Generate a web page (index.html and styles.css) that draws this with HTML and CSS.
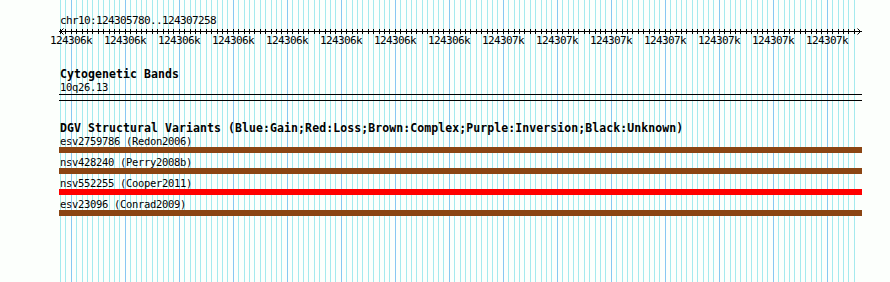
FILE: index.html
```html
<!DOCTYPE html>
<html lang="en">
<head>
  <meta charset="UTF-8" />
  <title>chr10:124305780..124307258</title>
  <link rel="stylesheet" href="styles.css">
</head>
<body>
  <div class="track-view">
    <div class="ref-name">chr10:124305780..124307258</div>

    <!-- ruler with arrows at both ends -->
    <div class="ruler">
      <svg class="ruler-arrows" width="803" height="7" viewBox="0 0 803 7">
        <polyline points="4.5,0.5 1.5,3.5 4.5,6.5" fill="none" stroke="#000" stroke-width="1" />
        <polyline points="798.5,0.5 801.5,3.5 798.5,6.5" fill="none" stroke="#000" stroke-width="1" />
      </svg>
    </div>
    <div class="ruler-labels">
      <span>124306k</span><span>124306k</span><span>124306k</span><span>124306k</span>
      <span>124306k</span><span>124306k</span><span>124306k</span><span>124306k</span>
      <span>124307k</span><span>124307k</span><span>124307k</span><span>124307k</span>
      <span>124307k</span><span>124307k</span><span>124307k</span>
    </div>

    <section class="track bands">
      <h2 class="track-title">Cytogenetic Bands</h2>
      <div class="feature-label">10q26.13</div>
      <div class="band"></div>
    </section>

    <section class="track dgv">
      <h2 class="track-title">DGV Structural Variants (Blue:Gain;Red:Loss;Brown:Complex;Purple:Inversion;Black:Unknown)</h2>
      <div class="feature">
        <div class="feature-label">esv2759786 (Redon2006)</div>
        <div class="bar complex"></div>
      </div>
      <div class="feature">
        <div class="feature-label">nsv428240 (Perry2008b)</div>
        <div class="bar complex"></div>
      </div>
      <div class="feature">
        <div class="feature-label">nsv552255 (Cooper2011)</div>
        <div class="bar loss"></div>
      </div>
      <div class="feature">
        <div class="feature-label">esv23096 (Conrad2009)</div>
        <div class="bar complex"></div>
      </div>
    </section>
  </div>
</body>
</html>
```

FILE: styles.css
```css
body {
  margin: 0;
  background: #fcfffc;
  font-family: 'DejaVu Sans Mono', monospace;
  color: #000;
}
.track-view {
  width: 890px;
  height: 282px;
  overflow: hidden;
  /* grid: major lines every 54px, minor every 5.4px */
  background:
    repeating-linear-gradient(90deg, #87c8f2 0 1px, transparent 1px 54px) 71px 0 / 757px 100% no-repeat,
    repeating-linear-gradient(90deg, #a4eaee 0 1px, transparent 1px 5.4px) 60px 0 / 796px 100% no-repeat,
    #fcfffc;
}
.ref-name {
  padding: 15px 0 0 60px;
  font-size: 11px;
  letter-spacing: -0.62px;
  line-height: 12px;
}
.ruler {
  position: relative;
  width: 803px;
  height: 7px;
  margin: 1px 0 0 59px;
  background:
    linear-gradient(#000, #000) 0 3px / 100% 1px no-repeat,
    repeating-linear-gradient(90deg, #000 0 1px, transparent 1px 5.4px) 1px 1px / 796px 5px no-repeat;
}
.ruler-arrows {
  position: absolute;
  top: 0;
  left: 0;
  display: block;
}
.ruler-labels {
  display: flex;
  margin-left: 44px;
  font-size: 11px;
  letter-spacing: -0.62px;
  line-height: 12px;
}
.ruler-labels span {
  width: 54px;
  flex: none;
  text-align: center;
  white-space: nowrap;
}
.track {
  margin-top: 21px;
}
.track-title {
  margin: 0;
  padding-left: 60px;
  font-size: 11.5px;
  letter-spacing: 0.08px;
  font-weight: bold;
  line-height: 12px;
  white-space: nowrap;
}
.feature-label {
  padding-left: 60px;
  font-size: 10.5px;
  letter-spacing: -0.32px;
  line-height: 12px;
  white-space: nowrap;
}
.bands .feature-label {
  margin-top: 1px;
}
.band {
  width: 803px;
  height: 5px;
  margin: 1px 0 0 59px;
  border-top: 1px solid #000;
  border-bottom: 1px solid #000;
}
.dgv {
  margin-top: 21px;
}
.dgv .track-title {
  margin-bottom: 1px;
}
.feature + .feature {
  margin-top: 3px;
}
.bar {
  width: 803px;
  height: 6px;
  margin-left: 59px;
}
.bar.complex {
  background: #8b4513;
}
.bar.loss {
  background: #ff0000;
}
```
